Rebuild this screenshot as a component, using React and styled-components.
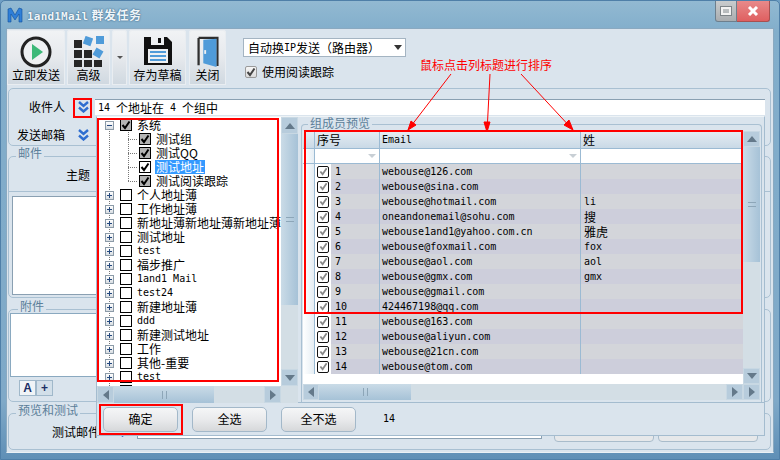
import React from 'react';
import styled, { createGlobalStyle } from 'styled-components';

const cjk = '"Noto Sans CJK SC", "Liberation Sans", sans-serif';
const mono = '"DejaVu Sans Mono", "Liberation Mono", monospace';

const GlobalStyle = createGlobalStyle`
  html, body { margin: 0; padding: 0; background: #6f9fc4; overflow: hidden; }
  * { box-sizing: border-box; }
`;

const Win = styled.div`
  position: relative;
  width: 780px;
  height: 460px;
  display: flex;
  flex-direction: column;
  overflow: hidden;
  font-family: ${cjk};
  font-size: 12px;
  line-height: 14px;
  color: #000;
  background: linear-gradient(#92b9d2, #82aecb 30px, #7fa9c8 400px, #5f8fb6);
  border: 1px solid #4f7fa8;
  border-radius: 5px 5px 0 0;
`;

const TitleBar = styled.div`
  height: 27px;
  flex: none;
  display: flex;
  align-items: flex-start;
  padding: 6px 0 0 6px;
`;

const TitleText = styled.div`
  margin-left: 4px;
  font-family: ${mono};
  font-size: 11px;
  font-weight: 700;
  line-height: 16px;
  letter-spacing: 0.2px;
  white-space: nowrap;
  color: #eef5f9;
  text-shadow: 0 0 2px #3f6a8c, 0 0 1px #3f6a8c;
`;

const TitleCjk = styled.span`
  margin-left: 3px;
  font-family: ${cjk};
  font-size: 12px;
  letter-spacing: 0.5px;
`;

const WinButtons = styled.div`
  margin-left: auto;
  margin-right: 9px;
  margin-top: -6px;
  display: flex;
`;

const RestoreBtn = styled.div`
  width: 22px;
  height: 21px;
  background: linear-gradient(#c9ccce, #a9adb0);
  border: 1px solid #6d7f8d;
  border-top: none;
  border-radius: 0 0 0 3px;
  display: flex;
  align-items: center;
  justify-content: center;
`;

const RestoreGlyph = styled.div`
  width: 10px;
  height: 8px;
  border: 2px solid #f2f2f2;
  outline: 1px solid #7d8488;
`;

const CloseBtn = styled.div`
  width: 33px;
  height: 21px;
  background: linear-gradient(#e88a8a, #df5f60);
  border: 1px solid #a85050;
  border-left: none;
  border-top: none;
  border-radius: 0 0 3px 0;
  display: flex;
  align-items: center;
  justify-content: center;
`;

const Client = styled.div`
  flex: 1;
  margin: 0 5px 6px 5px;
  background: #dae4ed;
  border: 1px solid #8aa9c0;
  border-bottom: 1px solid #eaf0f5;
  display: flex;
  flex-direction: column;
  min-height: 0;
`;

const Toolbar = styled.div`
  height: 59px;
  flex: none;
  display: flex;
  padding: 1px 0 0 0;
`;

const ToolBtn = styled.div`
  width: ${p => p.$w}px;
  margin-right: ${p => p.$gap || 2}px;
  height: 55px;
  border-radius: 3px 3px 0 0;
  background: linear-gradient(#f1f3f5, #e6e9ed 50%, #cfd8e0);
  box-shadow: inset 0 0 0 1px #e9edf1;
  display: flex;
  flex-direction: column;
  align-items: center;
  padding-top: 6px;
`;

const ToolLabel = styled.div`
  margin-top: auto;
  margin-bottom: 3px;
  white-space: nowrap;
`;

const DropBtn = styled(ToolBtn)`
  justify-content: center;
  padding-top: 0;
`;

const DropArrow = styled.div`
  width: 0;
  height: 0;
  border-left: 3px solid transparent;
  border-right: 3px solid transparent;
  border-top: 3px solid #555;
`;

const ToolOptions = styled.div`
  margin-left: 15px;
  padding-top: 8px;
  display: flex;
  flex-direction: column;
  gap: 8px;
`;

const Combo = styled.div`
  width: 163px;
  height: 19px;
  background: #fff;
  border: 1px solid #a4b4c2;
  display: flex;
  align-items: center;
  padding-left: 4px;
  position: relative;
`;

const ComboArrow = styled.div`
  margin-left: auto;
  margin-right: 3px;
  width: 0;
  height: 0;
  border-left: 4px solid transparent;
  border-right: 4px solid transparent;
  border-top: 5px solid #333;
`;

const CheckRow = styled.div`
  display: flex;
  align-items: center;
  gap: 5px;
  padding-left: 2px;
`;

const SmallCheck = styled.div`
  width: 12px;
  height: 12px;
  border: 1px solid #9a9a9a;
  border-radius: 2px;
  background: linear-gradient(#f6f6f6, #dcdcdc);
  display: flex;
  align-items: center;
  justify-content: center;
`;

const Latin = styled.span`
  font-family: ${mono};
  font-size: 10px;
`;

const GroupBox = styled.div`
  margin: 0 2px 0 1px;
  border: 1px solid #a9c0d2;
  border-radius: 5px;
  flex: none;
  height: ${p => p.$h}px;
  position: relative;
`;

const Legend = styled.div`
  display: block;
  width: fit-content;
  height: 13px;
  line-height: 12px;
  margin: ${p => p.$top || 0}px 0 ${p => p.$after || -4}px ${p => p.$left || 9}px;
  padding: 0 2px;
  color: #5c7f9a;
  background: #dae4ed;
  position: relative;
  z-index: 1;
  flex: none;
`;

const RecipientGroup = styled(GroupBox)`
  margin-top: 0;
  padding: 10px 5px 0 0;
`;

const FieldRow = styled.div`
  display: flex;
  align-items: center;
  height: 16px;
`;

const FieldLabel = styled.div`
  width: ${p => p.$w}px;
  text-align: right;
  flex: none;
  white-space: nowrap;
`;

const ChevronBtn = styled.div`
  width: 20px;
  margin-left: ${p => p.$ml || 8}px;
  display: flex;
  justify-content: center;
  flex: none;
`;

const TextInput = styled.div`
  flex: 1;
  height: 16px;
  background: #fff;
  border-top: 1px solid #8aa0b2;
  margin-left: 2px;
  padding-left: 3px;
  line-height: 15px;
  display: flex;
  gap: 6px;
  white-space: nowrap;
`;

const SecondRow = styled(FieldRow)`
  margin-top: 12px;
`;

const SubjectRow = styled.div`
  height: 35px;
  border-bottom: 1px solid #a9c0d2;
  padding-top: 11px;
`;

const BodyBox = styled.div`
  margin: 4px 0 0 3px;
  width: 90px;
  height: 99px;
  background: #fff;
  border: 1px solid #8aa0b2;
`;

const AttachBox = styled.div`
  margin: 3px 0 0 1px;
  width: 90px;
  height: 64px;
  background: #fff;
  border: 1px solid #8aa9c0;
`;

const TabRow = styled.div`
  display: flex;
  margin: 3px 0 0 10px;
`;

const MiniTab = styled.div`
  width: 17px;
  height: 16px;
  border: 1px solid #a0b8ca;
  background: ${p => (p.$on ? '#f0f4f7' : '#d2dfe9')};
  display: flex;
  align-items: center;
  justify-content: center;
  font-family: "Liberation Sans", sans-serif;
  font-weight: 700;
  font-size: 12px;
  color: #1c2f66;
`;

const TestRow = styled.div`
  display: flex;
  align-items: flex-start;
  padding-top: 11px;
  height: 100%;
`;

const TestInput = styled.div`
  margin-left: 5px;
  width: 405px;
  height: 24px;
  background: #fff;
  border-bottom: 1px solid #8aa0b2;
  border-right: 1px solid #8aa0b2;
  border-left: 1px solid #8aa0b2;
  margin-top: -10px;
`;

const TestBtn = styled.div`
  width: 100px;
  height: 28px;
  margin-left: ${p => p.$ml}px;
  margin-top: -11px;
  background: #e6e8ea;
  border: 1px solid #a9bccb;
  border-radius: 4px;
`;

// popup that covers the lower half of the window
const Popup = styled.div`
  position: absolute;
  left: 95px;
  top: 115px;
  width: 669px;
  height: 320px;
  background: #dae4ed;
  border: 1px solid #a4bccf;
  border-top: 1px solid #eef3f6;
  display: flex;
  flex-direction: column;
  z-index: 2;
`;

const Panes = styled.div`
  height: 286px;
  flex: none;
  display: flex;
  border-bottom: 1px solid #a4bccf;
`;

const TreePane = styled.div`
  width: 201px;
  flex: none;
  display: grid;
  grid-template-columns: 184px 17px;
  grid-template-rows: 269px 17px;
`;

const TreeBody = styled.div`
  background: #fff;
  overflow: hidden;
  position: relative;
  padding-top: 1px;

  &::before {
    content: '';
    position: absolute;
    left: 12px;
    top: 10px;
    bottom: 0;
    border-left: 1px dotted #777;
  }
`;

const TreeRow = styled.div`
  height: 14px;
  display: flex;
  align-items: center;
  position: relative;
  white-space: nowrap;
  padding-left: ${p => (p.$child ? 42 : 8)}px;

  ${p => p.$child && `
    &::before {
      content: '';
      position: absolute;
      left: 31px;
      top: ${p.$first ? 0 : -7}px;
      height: ${p.$first ? 7 : 14}px;
      border-left: 1px dotted #777;
    }
    &::after {
      content: '';
      position: absolute;
      left: 31px;
      top: 7px;
      width: 9px;
      border-top: 1px dotted #777;
    }
  `}
`;

const Expander = styled.div`
  width: 9px;
  height: 9px;
  border: 1px solid #8c9ba8;
  background: linear-gradient(#fff, #d8dde2);
  position: relative;
  margin-right: 6px;
  flex: none;
  z-index: 1;

  &::before {
    content: '';
    position: absolute;
    left: 1px;
    top: 3px;
    width: 5px;
    height: 1px;
    background: #23487e;
  }

  ${p => p.$plus && `
    &::after {
      content: '';
      position: absolute;
      left: 3px;
      top: 1px;
      width: 1px;
      height: 5px;
      background: #23487e;
    }
  `}
`;

const TreeCheck = styled.div`
  width: 12px;
  height: 12px;
  flex: none;
  border: 1px solid #000;
  background: ${p => (p.$mixed ? '#b4b4b4' : '#fff')};
  display: flex;
  align-items: center;
  justify-content: center;
  margin-right: ${p => (p.$child ? 4 : 5)}px;
  position: relative;
  z-index: 1;
`;

const TreeLabel = styled.div`
  padding: 0 1px;
  margin-left: ${p => (p.$child ? 0 : -1)}px;
  background: ${p => (p.$sel ? '#3399ff' : 'transparent')};
  color: ${p => (p.$sel ? '#fff' : '#000')};
  font-family: ${p => (p.$latin ? mono : cjk)};
  font-size: ${p => (p.$latin ? 10 : 12)}px;
`;

const VScroll = styled.div`
  background: #d3dee5;
  display: flex;
  flex-direction: column;
  height: ${p => p.$h}px;
`;

const HScroll = styled.div`
  background: #d3dee5;
  display: flex;
  height: ${p => p.$h || 17}px;
`;

const ScrollBtn = styled.div`
  flex: none;
  width: ${p => p.$w || 17}px;
  height: ${p => p.$hh || 17}px;
  background: #b7ccdc;
  border: 1px solid #c8d8e3;
  display: flex;
  align-items: center;
  justify-content: center;
`;

const VThumb = styled.div`
  height: ${p => p.$h}px;
  flex: none;
  background: linear-gradient(90deg, #cadbe7, #a6c2d7);
  display: flex;
  align-items: center;
  justify-content: center;
`;

const HThumb = styled.div`
  width: ${p => p.$w}px;
  flex: none;
  background: linear-gradient(#cadbe7, #a6c2d7);
  display: flex;
  align-items: center;
  justify-content: center;
`;

const ScrollGap = styled.div`
  flex: 1;
`;

const GripH = styled.div`
  width: 8px;
  height: 5px;
  border-top: 1px solid #8da6b8;
  border-bottom: 1px solid #8da6b8;
`;

const GripV = styled.div`
  width: 5px;
  height: 8px;
  border-left: 1px solid #8da6b8;
  border-right: 1px solid #8da6b8;
`;

const Arrow = styled.div`
  width: 0;
  height: 0;
  ${p => p.$dir === 'up' && 'border-left: 5px solid transparent; border-right: 5px solid transparent; border-bottom: 6px solid #64798a;'}
  ${p => p.$dir === 'down' && 'border-left: 5px solid transparent; border-right: 5px solid transparent; border-top: 6px solid #64798a;'}
  ${p => p.$dir === 'left' && 'border-top: 5px solid transparent; border-bottom: 5px solid transparent; border-right: 6px solid #64798a;'}
  ${p => p.$dir === 'right' && 'border-top: 5px solid transparent; border-bottom: 5px solid transparent; border-left: 6px solid #64798a;'}
`;

const Corner = styled.div`
  background: #d3dee5;
`;

const GridPane = styled.div`
  width: 461px;
  margin-left: 3px;
  display: flex;
  flex-direction: column;
`;

const GridBox = styled.div`
  flex: 1;
  border: 1px solid #a9c0d2;
  border-radius: 4px 4px 0 0;
  padding: 6px 1px 0 1px;
  border-bottom: none;
  display: flex;
  flex-direction: column;
`;

const GridArea = styled.div`
  display: flex;
  height: 253px;
`;

const Table = styled.div`
  width: 440px;
  background: #fff;
  display: flex;
  flex-direction: column;
`;

const GridRow = styled.div`
  display: grid;
  grid-template-columns: 12px 65px 201px 1fr;
  height: ${p => p.$h}px;
  flex: none;
  border-bottom: 1px solid #9bbad3;
`;

const HeadCell = styled.div`
  border-right: 1px solid #9bbad3;
  background: linear-gradient(#e6edf3, #c9d9e6);
  padding-left: 2px;
  line-height: 17px;
  font-family: ${p => (p.$latin ? mono : cjk)};
  font-size: ${p => (p.$latin ? 10 : 12)}px;
`;

const FilterCell = styled.div`
  border-right: 1px solid #9bbad3;
  background: #fff;
  display: flex;
  align-items: center;
  justify-content: flex-end;
  padding-right: 3px;
`;

const FilterArrow = styled.div`
  width: 0;
  height: 0;
  border-left: 4px solid transparent;
  border-right: 4px solid transparent;
  border-top: 4px solid #c8cfd5;
`;

const IndicatorCell = styled.div`
  border-right: 1px solid #9bbad3;
  background: linear-gradient(90deg, #fff, #e6eef4);
`;

const NumCell = styled.div`
  border-right: 1px solid #9bbad3;
  background: ${p => p.$bg};
  display: flex;
  align-items: center;
`;

const CheckSlot = styled.div`
  width: 16px;
  height: 100%;
  background: #fff;
  display: flex;
  align-items: center;
  justify-content: center;
  flex: none;
`;

const RowCheck = styled.div`
  width: 12px;
  height: 12px;
  border: 1px solid #111;
  border-radius: 2px;
  background: #fff;
  display: flex;
  align-items: center;
  justify-content: center;
`;

const NumText = styled.div`
  margin-left: 4px;
  margin-top: 1px;
  font-family: ${mono};
  font-size: 10px;
`;

const DataCell = styled.div`
  border-right: ${p => (p.$last ? 'none' : '1px solid #9bbad3')};
  background: ${p => p.$bg};
  padding-left: ${p => p.$pad}px;
  font-family: ${p => (p.$cn ? cjk : mono)};
  font-size: ${p => (p.$cn ? 12 : 10)}px;
  line-height: 15px;
  white-space: nowrap;
`;

const Footer = styled.div`
  flex: 1;
  display: flex;
  align-items: center;
  padding-left: 6px;
  gap: 14px;
`;

const PlainBtn = styled.div`
  width: 75px;
  height: 25px;
  border: 1px solid #a3b8c9;
  border-radius: 5px;
  background: linear-gradient(#f5f6f7, #e9eaec 50%, #d6d8da);
  display: flex;
  align-items: center;
  justify-content: center;
`;

const Count = styled.div`
  margin-left: 13px;
  font-family: ${mono};
  font-size: 10px;
`;

// red annotations drawn on top of the screenshot
const RedMark = styled.div`
  position: absolute;
  left: ${p => p.$l}px;
  top: ${p => p.$t}px;
  width: ${p => p.$w}px;
  height: ${p => p.$h}px;
  border: 2px solid #f00;
  z-index: 3;
  pointer-events: none;
`;

const Note = styled.div`
  position: absolute;
  left: 419px;
  top: 57px;
  color: #f00;
  white-space: nowrap;
  z-index: 3;
`;

const ArrowLayer = styled.svg`
  position: absolute;
  left: -1px;
  top: -1px;
  z-index: 3;
  pointer-events: none;
`;

const Check = ({ color = '#000', size = 10 }) => (
  <svg width={size} height={size} viewBox="0 0 10 10">
    <path d="M1.5 5 L4 8 L8.5 1.5" fill="none" stroke={color} strokeWidth="2" />
  </svg>
);

const Chevrons = () => (
  <svg width="11" height="12" viewBox="0 0 11 12">
    <path d="M1 1 L5.5 5 L10 1 M1 6.5 L5.5 10.5 L10 6.5" fill="none" stroke="#2f6ed0" strokeWidth="2.4" />
  </svg>
);

const AppLogo = () => (
  <svg width="16" height="16" viewBox="0 0 16 16">
    <path d="M1 15 V2 L4 1 L8 8 L12 1 L15 2 V15 H12 V7 L8 13 L4 7 V15 Z" fill="#2f7fd8" stroke="#0f4f9a" strokeWidth="0.6" />
  </svg>
);

const PlayIcon = () => (
  <svg width="32" height="32" viewBox="0 0 32 32">
    <circle cx="16" cy="16" r="14" fill="#eef0f2" stroke="#222" strokeWidth="3" />
    <path d="M12 8 L23 16 L12 24 Z" fill="#3cb878" />
  </svg>
);

const GridIcon = () => (
  <svg width="32" height="32" viewBox="0 0 32 32">
    <g fill="#262626">
      <rect x="1" y="4" width="8" height="8" />
      <rect x="1" y="14" width="8" height="8" />
      <rect x="11" y="14" width="8" height="8" />
      <rect x="1" y="24" width="8" height="7" />
      <rect x="11" y="24" width="8" height="7" />
      <rect x="21" y="24" width="8" height="7" />
    </g>
    <g fill="#4f9bd9">
      <rect x="11" y="1" width="8" height="8" transform="rotate(20 15 5)" />
      <rect x="23" y="0" width="8" height="8" />
      <rect x="21" y="13" width="8" height="8" transform="rotate(30 25 17)" />
    </g>
  </svg>
);

const SaveIcon = () => (
  <svg width="30" height="30" viewBox="0 0 30 30">
    <path d="M1 1 H24 L29 6 V29 H1 Z" fill="#111" />
    <rect x="8" y="1" width="13" height="8" fill="#eef0f2" />
    <rect x="15" y="2" width="3" height="5" fill="#111" />
    <rect x="5" y="13" width="20" height="14" fill="#eef0f2" />
    <path d="M7 16 H23 M7 20 H23 M7 24 H23" stroke="#4f9bd9" strokeWidth="2" />
  </svg>
);

const DoorIcon = () => (
  <svg width="24" height="34" viewBox="0 0 24 34">
    <path d="M2 2 H22 V32" fill="none" stroke="#2f2f2f" strokeWidth="2.4" />
    <path d="M2 2 V31" fill="none" stroke="#2f2f2f" strokeWidth="2.4" />
    <path d="M7 4 L21 3 V33 L7 29 Z" fill="#4f9bd9" />
    <rect x="8" y="15" width="2" height="4" fill="#eef0f2" />
  </svg>
);

const CloseGlyph = () => (
  <svg width="12" height="10" viewBox="0 0 12 10">
    <path d="M2 1 L10 9 M10 1 L2 9" stroke="#fff" strokeWidth="3" />
  </svg>
);

const tree = [
  { label: '系统', open: true, mixed: true, on: true },
  { label: '测试组', child: true, first: true, mixed: true, on: true },
  { label: '测试QQ', child: true, mixed: true, on: true },
  { label: '测试地址', child: true, on: true, sel: true },
  { label: '测试阅读跟踪', child: true, mixed: true, on: true },
  { label: '个人地址薄' },
  { label: '工作地址薄' },
  { label: '新地址薄新地址薄新地址薄' },
  { label: '测试地址' },
  { label: 'test', latin: true },
  { label: '福步推广' },
  { label: '1and1 Mail', latin: true },
  { label: 'test24', latin: true },
  { label: '新建地址薄' },
  { label: 'ddd', latin: true },
  { label: '新建测试地址' },
  { label: '工作' },
  { label: '其他-重要' },
  { label: 'test', latin: true },
  { label: '' },
];

const rows = [
  ['webouse@126.com', ''],
  ['webouse@sina.com', ''],
  ['webouse@hotmail.com', 'li'],
  ['oneandonemail@sohu.com', '搜', true],
  ['webouse1and1@yahoo.com.cn', '雅虎', true],
  ['webouse@foxmail.com', 'fox'],
  ['webouse@aol.com', 'aol'],
  ['webouse@gmx.com', 'gmx'],
  ['webouse@gmail.com', ''],
  ['424467198@qq.com', ''],
  ['webouse@163.com', ''],
  ['webouse@aliyun.com', ''],
  ['webouse@21cn.com', ''],
  ['webouse@tom.com', ''],
];

export default function App() {
  return (
    <Win>
      <GlobalStyle />
      <TitleBar>
        <AppLogo />
        <TitleText>1and1Mail<TitleCjk>群发任务</TitleCjk></TitleText>
        <WinButtons>
          <RestoreBtn><RestoreGlyph /></RestoreBtn>
          <CloseBtn><CloseGlyph /></CloseBtn>
        </WinButtons>
      </TitleBar>

      <Client>
        <Toolbar>
          <ToolBtn $w={58}><PlayIcon /><ToolLabel>立即发送</ToolLabel></ToolBtn>
          <ToolBtn $w={43}><GridIcon /><ToolLabel>高级</ToolLabel></ToolBtn>
          <DropBtn $w={15}><DropArrow /></DropBtn>
          <ToolBtn $w={57} $gap={3}><SaveIcon /><ToolLabel>存为草稿</ToolLabel></ToolBtn>
          <ToolBtn $w={37}><DoorIcon /><ToolLabel>关闭</ToolLabel></ToolBtn>
          <ToolOptions>
            <Combo>自动换<Latin>IP</Latin>发送（路由器）<ComboArrow /></Combo>
            <CheckRow>
              <SmallCheck><Check color="#444" /></SmallCheck>
              使用阅读跟踪
            </CheckRow>
          </ToolOptions>
        </Toolbar>

        <RecipientGroup $h={58}>
          <FieldRow>
            <FieldLabel $w={56}>收件人</FieldLabel>
            <ChevronBtn><Chevrons /></ChevronBtn>
            <TextInput><Latin>14</Latin>个地址在<Latin>4</Latin>个组中</TextInput>
          </FieldRow>
          <SecondRow>
            <FieldLabel $w={56}>发送邮箱</FieldLabel>
            <ChevronBtn><Chevrons /></ChevronBtn>
          </SecondRow>
        </RecipientGroup>

        <Legend $top={1}>邮件</Legend>
        <GroupBox $h={142}>
          <SubjectRow><FieldLabel $w={81}>主题</FieldLabel></SubjectRow>
          <BodyBox />
        </GroupBox>

        <Legend $top={2} $left={11}>附件</Legend>
        <GroupBox $h={93}>
          <AttachBox />
          <TabRow>
            <MiniTab $on>A</MiniTab>
            <MiniTab>+</MiniTab>
          </TabRow>
        </GroupBox>

        <Legend $top={2}>预览和测试</Legend>
        <GroupBox $h={37}>
          <TestRow>
            <FieldLabel $w={91}>测试邮件</FieldLabel>
            <ChevronBtn $ml={12}><Chevrons /></ChevronBtn>
            <TestInput />
            <TestBtn $ml={12} />
            <TestBtn $ml={4} />
          </TestRow>
        </GroupBox>
      </Client>

      <Popup>
        <Panes>
          <TreePane>
            <TreeBody>
              {tree.map((t, i) => (
                <TreeRow key={i} $child={t.child} $first={t.first}>
                  {!t.child && <Expander $plus={!t.open} />}
                  <TreeCheck $mixed={t.mixed} $child={t.child}>{t.on && <Check />}</TreeCheck>
                  <TreeLabel $child={t.child} $sel={t.sel} $latin={t.latin}>{t.label}</TreeLabel>
                </TreeRow>
              ))}
            </TreeBody>
            <VScroll $h={269}>
              <ScrollBtn><Arrow $dir="up" /></ScrollBtn>
              <VThumb $h={171}><GripH /></VThumb>
              <ScrollGap />
              <ScrollBtn><Arrow $dir="down" /></ScrollBtn>
            </VScroll>
            <HScroll>
              <ScrollBtn><Arrow $dir="left" /></ScrollBtn>
              <HThumb $w={100}><GripV /></HThumb>
              <ScrollGap />
              <ScrollBtn><Arrow $dir="right" /></ScrollBtn>
            </HScroll>
            <Corner />
          </TreePane>

          <GridPane>
            <Legend $left={7} $after={-6}>组成员预览</Legend>
            <GridBox>
              <GridArea>
                <Table>
                  <GridRow $h={18}>
                    <HeadCell />
                    <HeadCell>序号</HeadCell>
                    <HeadCell $latin>Email</HeadCell>
                    <HeadCell>姓</HeadCell>
                  </GridRow>
                  <GridRow $h={15}>
                    <IndicatorCell />
                    <FilterCell><FilterArrow /></FilterCell>
                    <FilterCell><FilterArrow /></FilterCell>
                    <FilterCell />
                  </GridRow>
                  {rows.map((r, i) => {
                    const bg = i % 2 === 0 ? '#d3d5da' : '#cdcedb';
                    return (
                      <GridRow key={r[0]} $h={15}>
                        <IndicatorCell />
                        <NumCell $bg={bg}>
                          <CheckSlot><RowCheck><Check color="#888" size={9} /></RowCheck></CheckSlot>
                          <NumText>{i + 1}</NumText>
                        </NumCell>
                        <DataCell $bg={bg} $pad={2}>{r[0]}</DataCell>
                        <DataCell $bg={bg} $pad={3} $last $cn={r[2]}>{r[1]}</DataCell>
                      </GridRow>
                    );
                  })}
                </Table>
                <VScroll $h={253}>
                  <ScrollBtn $hh={16}><Arrow $dir="up" /></ScrollBtn>
                  <VThumb $h={115}><GripH /></VThumb>
                  <ScrollGap />
                  <ScrollBtn $hh={16}><Arrow $dir="down" /></ScrollBtn>
                </VScroll>
              </GridArea>
              <HScroll $h={16}>
                <ScrollBtn $w={16} $hh={16}><Arrow $dir="left" /></ScrollBtn>
                <HThumb $w={92}><GripV /></HThumb>
                <ScrollGap />
                <ScrollBtn $hh={16}><Arrow $dir="right" /></ScrollBtn>
                <ScrollBtn $hh={16}><Arrow $dir="right" /></ScrollBtn>
              </HScroll>
            </GridBox>
          </GridPane>
        </Panes>

        <Footer>
          <PlainBtn>确定</PlainBtn>
          <PlainBtn>全选</PlainBtn>
          <PlainBtn>全不选</PlainBtn>
          <Count>14</Count>
        </Footer>
      </Popup>

      <RedMark $l={72} $t={97} $w={19} $h={20} />
      <RedMark $l={96} $t={117} $w={182} $h={264} />
      <RedMark $l={303} $t={129} $w={439} $h={184} />
      <RedMark $l={98} $t={403} $w={84} $h={31} />

      <Note>鼠标点击列标题进行排序</Note>
      <ArrowLayer width="780" height="460" viewBox="0 0 780 460">
        <g stroke="#f00" strokeWidth="1" fill="#f00">
          <path d="M451 74 L408 130" />
          <path d="M408 130 L411 121 L416 125 Z" />
          <path d="M490 74 L487 132" />
          <path d="M487 132 L484 122 L490 122 Z" />
          <path d="M521 74 L573 130" />
          <path d="M573 130 L564 125 L569 120 Z" />
        </g>
      </ArrowLayer>
    </Win>
  );
}
